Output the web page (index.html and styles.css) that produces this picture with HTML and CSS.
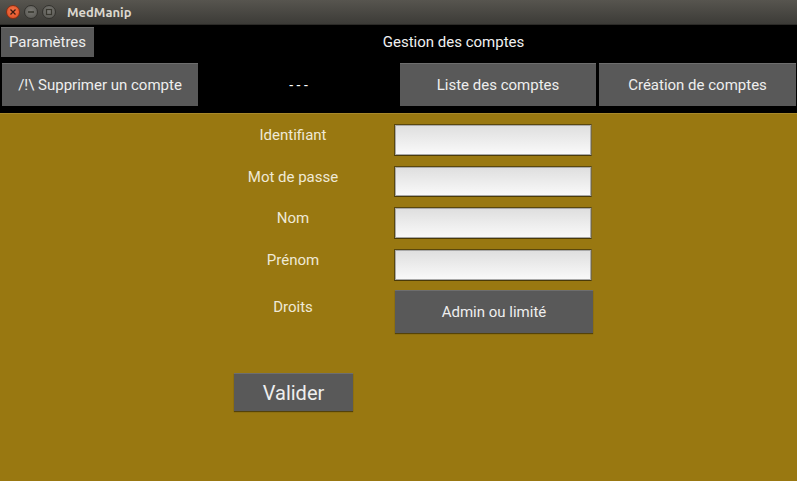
FILE: index.html
```html
<!DOCTYPE html>
<html>
<head>
<meta charset="utf-8">
<link rel="stylesheet" href="styles.css">
</head>
<body>
<div class="window">
  <div class="titlebar">
    <div class="wbtns">
      <span class="wbtn close"><svg width="8" height="8" viewBox="0 0 8 8"><path d="M1.5 1.5 L6.5 6.5 M6.5 1.5 L1.5 6.5" stroke="#3a1a10" stroke-width="1.3"/></svg></span>
      <span class="wbtn"><svg width="8" height="8" viewBox="0 0 8 8"><path d="M1 4 H7" stroke="#38372f" stroke-width="1.6"/></svg></span>
      <span class="wbtn"><svg width="8" height="8" viewBox="0 0 8 8"><rect x="1.5" y="1.5" width="5" height="5" fill="none" stroke="#38372f" stroke-width="1.2"/></svg></span>
    </div>
    <span class="wtitle">MedManip</span>
  </div>
  <div class="topbar">
    <div class="row1">
      <button class="btn params">Paramètres</button>
      <div class="pagetitle">Gestion des comptes</div>
    </div>
    <div class="row2">
      <button class="btn nav">/!\ Supprimer un compte</button>
      <div class="sep">- - -</div>
      <button class="btn nav">Liste des comptes</button>
      <button class="btn nav">Création de comptes</button>
    </div>
  </div>
  <div class="content">
    <div class="form">
      <div class="label">Identifiant</div><div class="field"><div class="input"></div></div>
      <div class="label">Mot de passe</div><div class="field"><div class="input"></div></div>
      <div class="label">Nom</div><div class="field"><div class="input"></div></div>
      <div class="label">Prénom</div><div class="field"><div class="input"></div></div>
      <div class="label droits">Droits</div><div class="field"><button class="btn admin">Admin ou limité</button></div>
    </div>
    <button class="btn valider">Valider</button>
  </div>
</div>
</body>
</html>
```
FILE: styles.css
```css
* { box-sizing: border-box; }
html, body { margin: 0; padding: 0; }
body { width: 797px; height: 481px; overflow: hidden; font-family: Roboto, "Liberation Sans", sans-serif; }
.window { display: flex; flex-direction: column; height: 481px; }
.titlebar {
  height: 25px; display: flex; align-items: center;
  background: linear-gradient(#57554f, #3c3b37);
  border-bottom: 1px solid #2b2a27;
}
.wbtns { display: flex; gap: 4px; padding-left: 6px; }
.wbtn {
  width: 14px; height: 14px; border-radius: 50%;
  background: radial-gradient(circle at 50% 40%, #7a7974, #55544f);
  border: 1px solid #33322e;
  display: flex; align-items: center; justify-content: center;
}
.wbtn.close { background: radial-gradient(circle at 50% 40%, #f5764a, #dd4a1f); border-color: #8a2e12; }
.wtitle { margin-left: 11px; font-family: Ubuntu, "DejaVu Sans", sans-serif; font-weight: bold; font-size: 13px; color: #dcd8cf; }
.topbar { background: #000; height: 88px; display: flex; flex-direction: column; }
.row1 { height: 32px; display: flex; align-items: center; padding-left: 1px; }
.btn {
  font-family: Roboto, "Liberation Sans", sans-serif;
  background: #595959; color: #eeeeee; border: none; border-top: 1px solid #6e6e6e;
  box-shadow: 0 1px 1px rgba(0,0,0,0.45);
  padding: 0; margin: 0; cursor: default;
}
.params { width: 93px; height: 30px; font-size: 15px; margin-top: 1px; }
.pagetitle { flex: 1; text-align: center; color: #f0f0f0; font-size: 15px; padding-left: 16px; padding-top: 1px; }
.row2 { display: grid; grid-template-columns: 199px 199px 200px 199px; height: 56px; padding-top: 6px; padding-bottom: 7px; }
.nav { height: 43px; font-size: 15px; }
.row2 > :nth-child(1) { margin: 0 1px 0 2px; }
.row2 > :nth-child(3) { margin: 0 2px 0 2px; }
.row2 > :nth-child(4) { margin: 0 1px 0 1px; }
.sep { color: #fff; font-size: 14px; display: flex; align-items: center; justify-content: center; }
.content { flex: 1; background: #997811; border-top: 1px solid #a8892a; }
.form {
  display: grid; grid-template-columns: 200px 199px; grid-auto-rows: auto;
  margin-left: 193px; padding-top: 10px; row-gap: 10px;
}
.label { color: #efe9d6; font-size: 15px; text-align: center; padding-top: 2px; }
.label.droits { padding-top: 7px; }
.field { padding-left: 1px; }
.input {
  height: 32px; border: 1px solid #5a470c; border-right-color: #7a6a3a; border-bottom-color: #4a3a08;
  background: linear-gradient(#dedede, #fafafa);
  box-shadow: inset 0 0 0 1px #a9a9a9;
}
.form .field:nth-child(4) .input { height: 31px; }
.admin { width: 198px; height: 43px; font-size: 15px; margin-left: 1px; margin-top: -1px; }
.valider { display: block; width: 119px; height: 38px; font-size: 20px; margin-left: 234px; margin-top: 40px; }
```
